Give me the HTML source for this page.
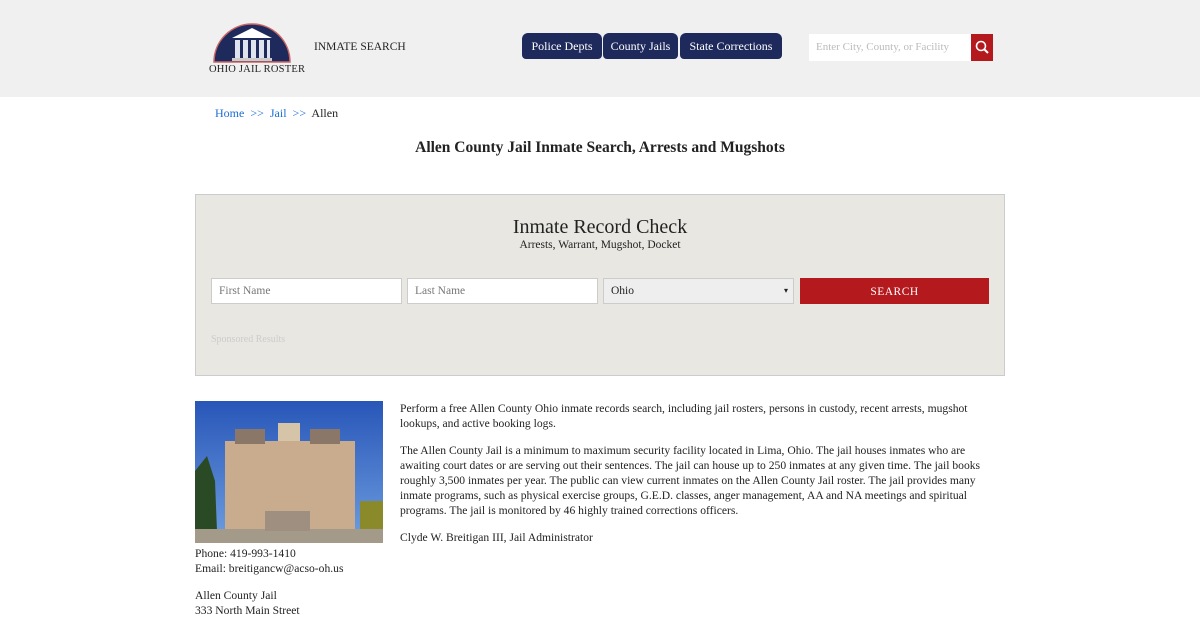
<!DOCTYPE html>
<html><head><meta charset="utf-8"><style>
body{margin:0;width:1200px;height:620px;overflow:hidden;background:#fff;font-family:"Liberation Serif",serif;color:#222}
.hdr{height:97px;background:#f0f0f0;position:relative}
.tab{position:absolute;top:33px;height:26px;background:#1f2a5c;color:#fff;font-size:12px;line-height:26px;text-align:center;border-radius:6px 6px 4px 4px;white-space:nowrap}
.crumb{position:absolute;top:106px;left:215px;font-size:12px}
.crumb a{color:#1a6fd6;text-decoration:none}
h1{position:absolute;top:139px;left:0;width:1200px;text-align:center;font-size:15.5px;font-weight:bold;margin:0}
.box{position:absolute;left:195px;top:194px;width:808px;height:180px;background:#e8e7e2;border:1px solid #ccc}
.in{position:absolute;top:83px;height:26px;border:1px solid #ccc;background:#fff;font-size:11.5px;color:#777;line-height:24px;padding-left:7px;box-sizing:border-box}
p{margin:0}
.txt{position:absolute;left:400px;font-size:11.6px;line-height:15px;width:600px}
.s{position:absolute;left:195px;font-size:11.6px;line-height:15px}
</style></head><body>
<div class="hdr">
<svg style="position:absolute;left:210px;top:20px" width="84" height="44" viewBox="0 0 84 44"><path d="M4 42A38 38 0 0 1 80 42Z" fill="#1f2a5c" stroke="#c66" stroke-width="1.5"/><path d="M22 18L42 8L62 18Z" fill="#fff"/><g fill="#dfe3ee"><rect x="25" y="20" width="5" height="18"/><rect x="33" y="20" width="5" height="18"/><rect x="41" y="20" width="5" height="18"/><rect x="49" y="20" width="5" height="18"/><rect x="57" y="20" width="3" height="18"/></g><rect x="22" y="38" width="40" height="3" fill="#ccc"/></svg>
<div style="position:absolute;left:209px;top:64px;font-size:10.5px;letter-spacing:.2px;white-space:nowrap">OHIO JAIL ROSTER</div>
<div style="position:absolute;left:314px;top:41px;font-size:11.5px;white-space:nowrap">INMATE SEARCH</div>
<div class="tab" style="left:522px;width:80px">Police Depts</div>
<div class="tab" style="left:603px;width:75px">County Jails</div>
<div class="tab" style="left:680px;width:102px">State Corrections</div>
<div style="position:absolute;left:809px;top:34px;width:162px;height:27px;background:#fff;font-size:11px;color:#bbb;line-height:27px;padding-left:7px;box-sizing:border-box;white-space:nowrap;overflow:hidden">Enter City, County, or Facility</div>
<div style="position:absolute;left:971px;top:34px;width:22px;height:27px;background:#b3191d"><svg width="22" height="27"><circle cx="10" cy="12" r="4.5" fill="none" stroke="#fff" stroke-width="1.6"/><path d="M13 15L17 19" stroke="#fff" stroke-width="2"/></svg></div>
</div>
<div class="crumb"><a>Home</a> &nbsp;<a>&gt;&gt;</a>&nbsp; <a>Jail</a> &nbsp;<a>&gt;&gt;</a>&nbsp; Allen</div>
<h1>Allen County Jail Inmate Search, Arrests and Mugshots</h1>
<div class="box">
<div style="position:absolute;top:21px;width:100%;text-align:center;font-size:20px">Inmate Record Check</div>
<div style="position:absolute;top:44px;width:100%;text-align:center;font-size:11.5px">Arrests, Warrant, Mugshot, Docket</div>
<div class="in" style="left:15px;width:191px">First Name</div>
<div class="in" style="left:211px;width:191px">Last Name</div>
<div class="in" style="left:407px;width:191px;background:#eee;color:#222">Ohio<span style="position:absolute;right:5px;font-size:8px">▾</span></div>
<div style="position:absolute;left:604px;top:83px;width:189px;height:26px;background:#b3191d;color:#fff;font-size:11.5px;line-height:28px;text-align:center;letter-spacing:.5px">SEARCH</div>
<div style="position:absolute;left:15px;top:139px;font-size:10px;color:#ccc">Sponsored Results</div>
</div>
<svg style="position:absolute;left:195px;top:401px" width="188" height="142" viewBox="0 0 188 142"><defs><linearGradient id="g" x1="0" y1="0" x2="0" y2="1"><stop offset="0" stop-color="#2856b8"/><stop offset="1" stop-color="#6e9ee0"/></linearGradient></defs><rect width="188" height="142" fill="url(#g)"/><rect x="30" y="40" width="130" height="90" fill="#c9ab8e"/><rect x="40" y="28" width="30" height="15" fill="#8a7768"/><rect x="115" y="28" width="30" height="15" fill="#8a7768"/><rect x="83" y="22" width="22" height="18" fill="#d6c4a8"/><path d="M0 70L12 55L20 80L22 130L0 130Z" fill="#2a4a25"/><rect x="165" y="100" width="23" height="30" fill="#8a8a2a"/><rect x="0" y="128" width="188" height="14" fill="#a39a8a"/><rect x="70" y="110" width="45" height="20" fill="#9f8f80"/></svg>
<div class="s" style="top:546px">Phone: 419-993-1410<br>Email: breitigancw@acso-oh.us</div>
<div class="s" style="top:588px">Allen County Jail<br>333 North Main Street</div>
<div class="txt" style="top:401px"><p>Perform a free Allen County Ohio inmate records search, including jail rosters, persons in custody, recent arrests, mugshot lookups, and active booking logs.</p><p style="margin-top:12px">The Allen County Jail is a minimum to maximum security facility located in Lima, Ohio. The jail houses inmates who are awaiting court dates or are serving out their sentences. The jail can house up to 250 inmates at any given time. The jail books roughly 3,500 inmates per year. The public can view current inmates on the Allen County Jail roster. The jail provides many inmate programs, such as physical exercise groups, G.E.D. classes, anger management, AA and NA meetings and spiritual programs. The jail is monitored by 46 highly trained corrections officers.</p><p style="margin-top:12px">Clyde W. Breitigan III, Jail Administrator</p></div>
</body></html>
